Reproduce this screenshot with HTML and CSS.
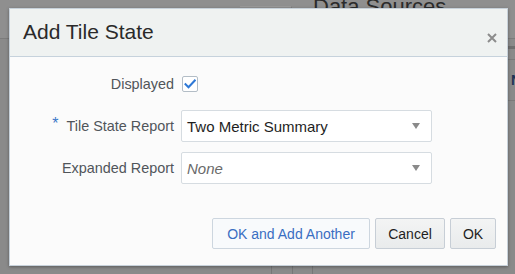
FILE: index.html
```html
<!DOCTYPE html>
<html>
<head>
<meta charset="utf-8">
<link rel="stylesheet" href="styles.css">
</head>
<body>
<div class="page">
  <div class="page-top">
    <div class="page-tab"></div>
    <div class="page-heading">Data Sources</div>
  </div>
  <div class="page-cell"><span>N</span></div>
  <div class="page-bar"></div>
  <div class="page-col c1"></div>
  <div class="page-col c2"></div>
  <div class="page-col c3"></div>
</div>

<div class="dialog">
  <div class="dialog-header">
    <h1 class="dialog-title">Add Tile State</h1>
    <svg class="close" width="10" height="10" viewBox="0 0 10 10"><path d="M1 1L9 9M9 1L1 9" stroke="#8c8c8c" stroke-width="2" fill="none"/></svg>
  </div>
  <div class="dialog-body">
    <div class="form">
      <label class="label">Displayed</label>
      <div class="field">
        <span class="checkbox">
          <svg width="12" height="10" viewBox="0 0 12 10"><path d="M1.5 5.2L4.5 8.2L10.8 1.5" stroke="#2e78d6" stroke-width="2" fill="none" stroke-linecap="square"/></svg>
        </span>
      </div>
      <label class="label"><span class="req">*</span>Tile State Report</label>
      <div class="field">
        <div class="select"><span class="value">Two Metric Summary</span><span class="arrow"></span></div>
      </div>
      <label class="label">Expanded Report</label>
      <div class="field">
        <div class="select"><span class="value placeholder">None</span><span class="arrow"></span></div>
      </div>
    </div>
  </div>
  <div class="dialog-footer">
    <button class="btn btn-secondary">OK and Add Another</button>
    <button class="btn btn-cancel">Cancel</button>
    <button class="btn btn-ok">OK</button>
  </div>
</div>
</body>
</html>
```

FILE: styles.css
```css
html, body {
  margin: 0;
  padding: 0;
}
body {
  width: 515px;
  height: 274px;
  overflow: hidden;
  background: #8a8a8a;
  font-family: "Liberation Sans", Arial, sans-serif;
  position: relative;
}
.page {
  width: 515px;
  height: 274px;
}
.page-top {
  height: 38px;
  background: #8f8f8f;
  border-bottom: 1px solid #7c7c7c;
  position: relative;
}
.page-tab {
  position: absolute;
  left: 240px;
  top: 6px;
  width: 51px;
  height: 32px;
  border-top: 1px solid #9a9a9a;
  border-right: 1px solid #7d7d7d;
}
.page-heading {
  position: absolute;
  left: 313px;
  top: -6px;
  font-size: 22px;
  color: #2b2b2b;
}
.page-cell {
  position: absolute;
  left: 508px;
  top: 59px;
  width: 20px;
  height: 40px;
  border-top: 1px solid #7a7a7a;
  border-bottom: 1px solid #7a7a7a;
  overflow: hidden;
}
.page-cell span {
  position: absolute;
  left: 3px;
  top: 12px;
  font-size: 14px;
  font-weight: bold;
  color: #1f3355;
}
.page-bar {
  position: absolute;
  left: 508px;
  top: 46px;
  width: 7px;
  height: 3px;
  background: #6f6f6f;
}
.page-col {
  position: absolute;
  top: 262px;
  height: 12px;
  width: 1px;
  background: #777;
}
.c1 { left: 271px; }
.c2 { left: 292px; }
.c3 { left: 312px; }

.dialog {
  position: absolute;
  left: 9px;
  top: 8px;
  width: 499px;
  height: 258px;
  box-sizing: border-box;
  border: 1px solid #c7d1da;
  background: #fbfbfb;
  box-shadow: 0 1px 3px rgba(0,0,0,0.35);
  display: flex;
  flex-direction: column;
}
.dialog-header {
  height: 47px;
  flex: none;
  background: #eff2f1;
  border-bottom: 1px solid #c6d2dc;
  display: flex;
  align-items: center;
  justify-content: space-between;
  padding: 0 10px 0 13px;
}
.dialog-title {
  margin: 0;
  font-size: 21px;
  font-weight: normal;
  color: #2a2a2a;
  margin-top: -1px;
}
.close {
  margin-top: 10px;
}
.dialog-body {
  flex: 1;
  padding-top: 11px;
}
.form {
  display: grid;
  grid-template-columns: 164px 251px;
  grid-auto-rows: 32px;
  column-gap: 7px;
  row-gap: 10px;
}
.label {
  display: flex;
  align-items: center;
  justify-content: flex-end;
  font-size: 14.4px;
  color: #50555a;
}
.req {
  color: #3b78c9;
  font-size: 16px;
  margin-right: 8px;
  margin-top: -4px;
}
.field {
  display: flex;
  align-items: center;
}
.checkbox {
  width: 14px;
  height: 14px;
  margin-left: 1px;
  border: 1px solid #b3bdc6;
  border-radius: 2px;
  background: #fff;
  display: flex;
  align-items: center;
  justify-content: center;
}
.select {
  width: 100%;
  height: 32px;
  box-sizing: border-box;
  border: 1px solid #d6dce1;
  border-radius: 2px;
  background: #fff;
  display: flex;
  align-items: center;
  justify-content: space-between;
  padding: 0 11px 0 5px;
}
.value {
  font-size: 15px;
  color: #1e1e1e;
}
.placeholder {
  font-style: italic;
  color: #6a6a6a;
}
.arrow {
  width: 0;
  height: 0;
  border-left: 4.5px solid transparent;
  border-right: 4.5px solid transparent;
  border-top: 6px solid #8a8a8a;
}
.dialog-footer {
  flex: none;
  display: flex;
  justify-content: flex-end;
  gap: 5px;
  padding: 0 11px 16px 0;
}
.btn {
  height: 31px;
  box-sizing: border-box;
  border: 1px solid #c7ced6;
  border-radius: 2px;
  font-family: "Liberation Sans", Arial, sans-serif;
  font-size: 14px;
  padding: 0;
  cursor: pointer;
}
.btn-secondary {
  width: 158px;
  background: #f8fafc;
  border-color: #cdd6df;
  color: #3a6ec2;
}
.btn-cancel {
  width: 70px;
  background: linear-gradient(#f3f4f4, #e9ebec);
  color: #1e1e1e;
}
.btn-ok {
  width: 46px;
  background: linear-gradient(#f3f4f4, #e9ebec);
  color: #1e1e1e;
}
```
